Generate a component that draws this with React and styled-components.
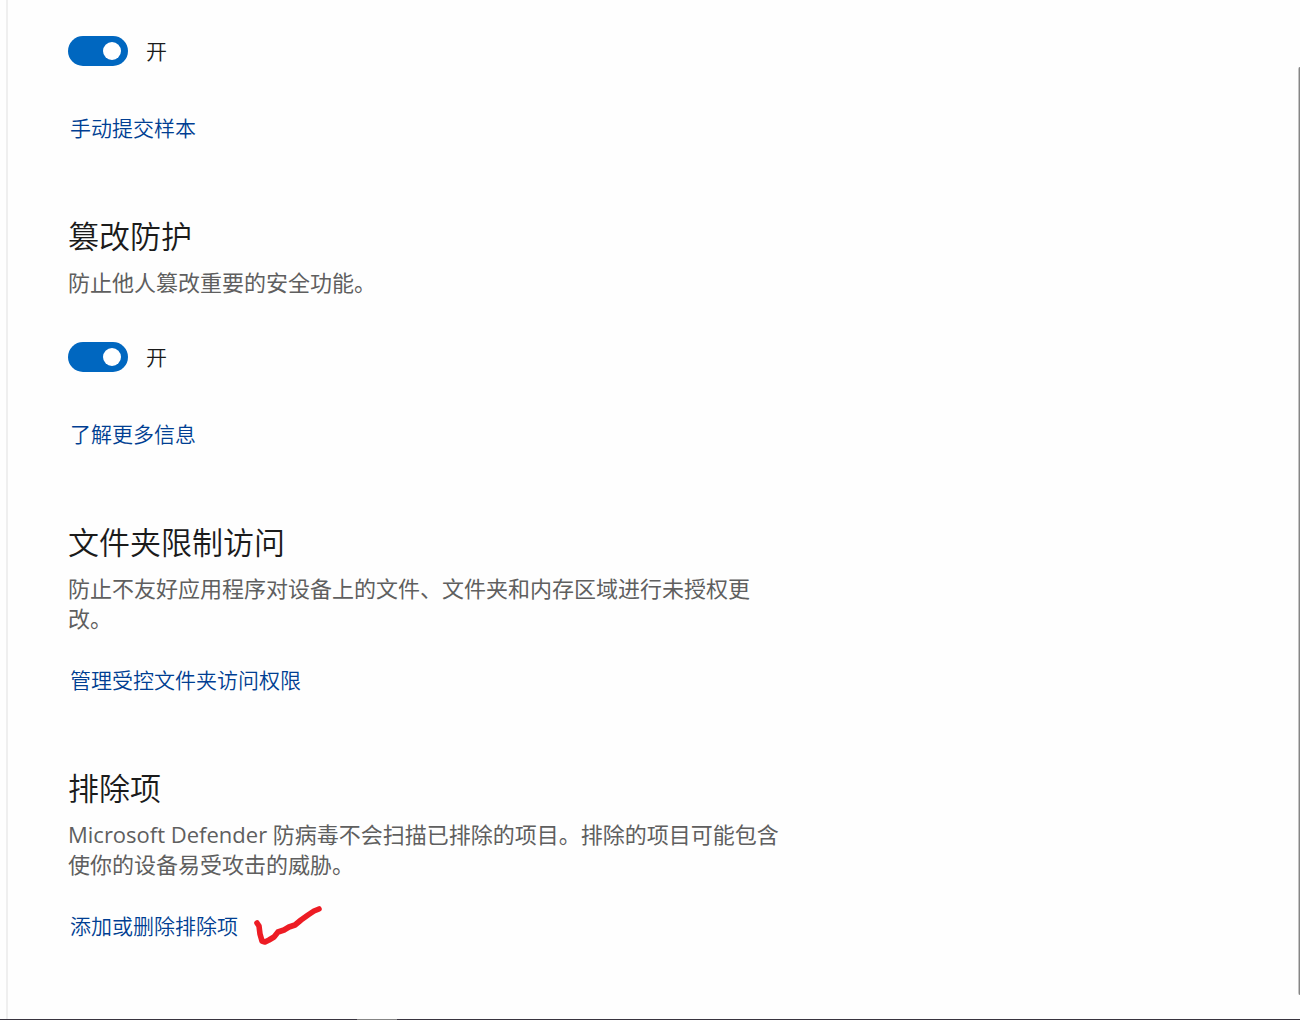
import { useId, useState } from "react";
import styled, { createGlobalStyle } from "styled-components";

const GlobalStyle = createGlobalStyle`
  * {
    box-sizing: border-box;
  }

  body {
    margin: 0;
    background: #fefefe;
    color: #1b1b1b;
    font-family: "Open Sans", "Noto Sans CJK SC", sans-serif;
    font-weight: 350;
  }
`;

const Page = styled.div`
  display: flex;
  flex-direction: column;
  min-height: 100vh;
`;

const Body = styled.div`
  display: flex;
  flex: 1;
  padding-left: 6px;
`;

const Content = styled.main`
  flex: 1;
  display: flex;
  flex-direction: column;
  gap: 72px;
  padding: 36px 60px;
  border-left: 2px solid #efefef;
`;

const Section = styled.section`
  display: flex;
  flex-direction: column;
  align-items: flex-start;
`;

const Title = styled.h2`
  margin: 0 0 9px;
  font-size: 31px;
  line-height: 44px;
  font-weight: 350;
`;

const Description = styled.p`
  max-width: 720px;
  margin: 0 0 1px;
  color: #5f5f5f;
  font-size: 22px;
  line-height: 30px;
  font-weight: 400;
`;

const ToggleRow = styled.div`
  display: flex;
  align-items: center;
  gap: 18px;
  height: 30px;
  margin-top: ${({ $spaced }) => ($spaced ? "44px" : "0")};
`;

const ToggleInput = styled.input`
  appearance: none;
  display: flex;
  align-items: center;
  justify-content: flex-end;
  width: 60px;
  height: 30px;
  margin: 0;
  padding: 0 7px;
  border-radius: 15px;
  background: #0067c0;
  cursor: pointer;

  &::before {
    content: "";
    width: 18px;
    height: 18px;
    border-radius: 50%;
    background: #fff;
  }

  &:not(:checked) {
    justify-content: flex-start;
    background: #8a8a8a;
  }
`;

const ToggleLabel = styled.label`
  font-size: 21px;
  line-height: 28px;
`;

const LinkRow = styled.div`
  display: flex;
  align-items: center;
  gap: 16px;
  height: 28px;
  margin-top: ${({ $afterToggle }) => ($afterToggle ? "48px" : "32px")};
  padding-left: 2px;
`;

const SettingsLink = styled.a`
  color: #003e92;
  font-size: 21px;
  line-height: 28px;
  text-decoration: none;

  &:hover {
    color: #5f5f5f;
  }
`;

const CheckMark = styled.svg`
  flex: none;
  width: 68px;
  height: 40px;
`;

const ScrollTrack = styled.div`
  display: flex;
  width: 2px;
  padding: 67px 0 24px;
`;

const ScrollThumb = styled.div`
  flex: 1;
  border-radius: 2px 0 0 2px;
  background: linear-gradient(to right, #c4c4c4 50%, #868686 50%);
`;

const BottomEdge = styled.footer`
  display: flex;
  height: 1px;
  padding-left: 357px;
  background: #38343f;
`;

const ActiveMark = styled.div`
  width: 40px;
  background: #858585;
`;

const Toggle = ({ spaced }) => {
  const id = useId();
  const [on, setOn] = useState(true);

  return (
    <ToggleRow $spaced={spaced}>
      <ToggleInput
        id={id}
        type="checkbox"
        role="switch"
        checked={on}
        onChange={(e) => setOn(e.target.checked)}
      />
      <ToggleLabel htmlFor={id}>{on ? "开" : "关"}</ToggleLabel>
    </ToggleRow>
  );
};

const sections = [
  { id: "samples", toggle: true, link: "手动提交样本" },
  {
    id: "tamper",
    title: "篡改防护",
    description: "防止他人篡改重要的安全功能。",
    toggle: true,
    link: "了解更多信息",
  },
  {
    id: "folders",
    title: "文件夹限制访问",
    description:
      "防止不友好应用程序对设备上的文件、文件夹和内存区域进行未授权更改。",
    link: "管理受控文件夹访问权限",
  },
  {
    id: "exclusions",
    title: "排除项",
    description:
      "Microsoft Defender 防病毒不会扫描已排除的项目。排除的项目可能包含使你的设备易受攻击的威胁。",
    link: "添加或删除排除项",
    marked: true,
  },
];

export default function App() {
  return (
    <Page>
      <GlobalStyle />
      <Body>
        <Content>
          {sections.map((s) => (
            <Section key={s.id}>
              {s.title && <Title>{s.title}</Title>}
              {s.description && <Description>{s.description}</Description>}
              {s.toggle && <Toggle spaced={Boolean(s.title)} />}
              <LinkRow $afterToggle={s.toggle}>
                <SettingsLink href={`#${s.id}`}>{s.link}</SettingsLink>
                {s.marked && (
                  <CheckMark viewBox="0 0 68 40" aria-hidden="true">
                    <path
                      d="M3 17 L5 20 L6 28 L8 35 L11 36 L15 34 L20 31 L24 26 L30 24 L35 21 L41 19 L47 14 L54 9 L60 5 L65 3"
                      fill="none"
                      stroke="#ed1c24"
                      strokeWidth="5.6"
                      strokeLinecap="round"
                      strokeLinejoin="round"
                    />
                  </CheckMark>
                )}
              </LinkRow>
            </Section>
          ))}
        </Content>
        <ScrollTrack>
          <ScrollThumb />
        </ScrollTrack>
      </Body>
      <BottomEdge>
        <ActiveMark />
      </BottomEdge>
    </Page>
  );
}
